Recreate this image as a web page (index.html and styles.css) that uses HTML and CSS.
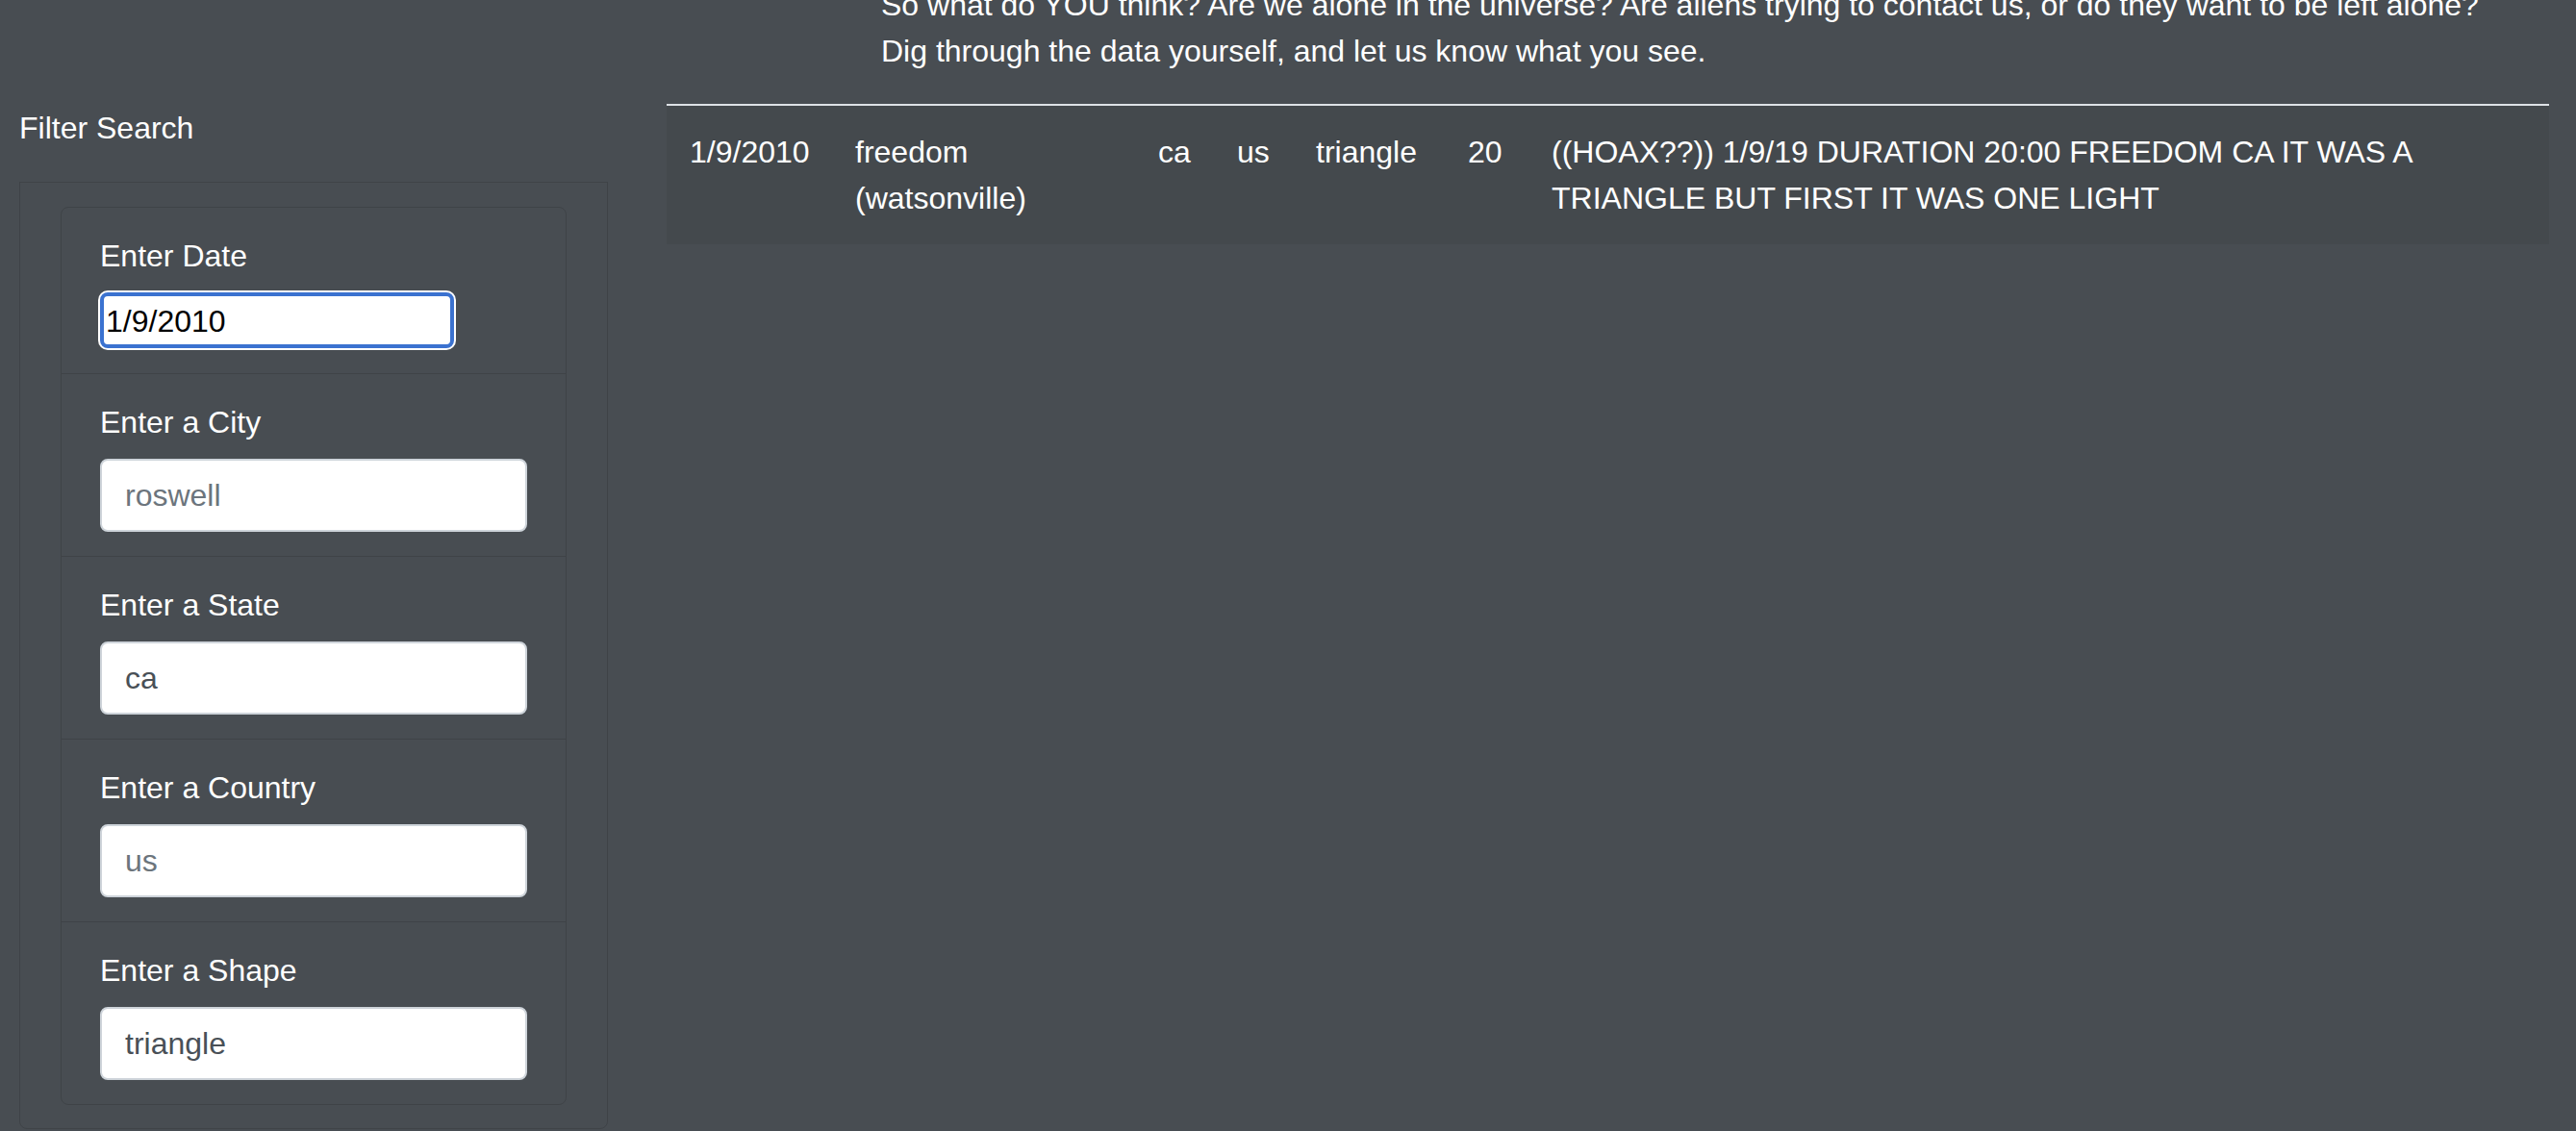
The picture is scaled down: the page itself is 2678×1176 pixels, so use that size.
FILE: index.html
```html
<!DOCTYPE html>
<html lang="en">
<head>
<meta charset="utf-8">
<title>UFO Sightings</title>
<link rel="stylesheet" href="styles.css">
</head>
<body>
<div class="intro">
  <p>So what do YOU think? Are we alone in the universe? Are aliens trying to contact us, or do they want to be left alone?<br>Dig through the data yourself, and let us know what you see.</p>
</div>
<div class="main">
  <aside class="sidebar">
    <p class="filter-title">Filter Search</p>
    <form class="filter-box">
      <ul class="filter-list">
        <li class="filter-item">
          <label class="filter-label" for="datetime">Enter Date</label>
          <input class="date-input" id="datetime" type="text" value="1/9/2010">
        </li>
        <li class="filter-item">
          <label class="filter-label" for="city">Enter a City</label>
          <input class="form-control" id="city" type="text" placeholder="roswell">
        </li>
        <li class="filter-item">
          <label class="filter-label" for="state">Enter a State</label>
          <input class="form-control" id="state" type="text" value="ca">
        </li>
        <li class="filter-item">
          <label class="filter-label" for="country">Enter a Country</label>
          <input class="form-control" id="country" type="text" placeholder="us">
        </li>
        <li class="filter-item">
          <label class="filter-label" for="shape">Enter a Shape</label>
          <input class="form-control" id="shape" type="text" value="triangle">
        </li>
      </ul>
    </form>
  </aside>
  <section class="results">
    <table class="ufo-table">
      <tbody>
        <tr class="ufo-row">
          <td class="c-date">1/9/2010</td>
          <td class="c-city">freedom (watsonville)</td>
          <td class="c-state">ca</td>
          <td class="c-country">us</td>
          <td class="c-shape">triangle</td>
          <td class="c-dur">20</td>
          <td class="c-comment">((HOAX??)) 1/9/19 DURATION 20:00 FREEDOM CA IT WAS A TRIANGLE BUT FIRST IT WAS ONE LIGHT</td>
        </tr>
      </tbody>
    </table>
  </section>
</div>
</body>
</html>
```

FILE: styles.css
```css
html, body {
  margin: 0;
  padding: 0;
}

body {
  background: #484d52;
  color: #ffffff;
  font-family: "Liberation Sans", Arial, sans-serif;
  font-size: 32px;
  line-height: 48px;
  width: 2678px;
  height: 1176px;
  overflow: hidden;
}

.intro {
  margin: -19px 0 0 916px;
}

.intro p {
  margin: 0 0 31px 0;
  white-space: nowrap;
}

.main {
  display: flex;
  align-items: flex-start;
}

.sidebar {
  width: 612px;
  margin-left: 20px;
  padding-top: 1px;
  flex: none;
}

.filter-title {
  margin: 0 0 32px 0;
}

.filter-box {
  margin: 0;
  border: 1px solid rgba(0, 0, 0, 0.125);
  border-radius: 0 0 8px 8px;
  padding: 25px 42px 24px;
}

.filter-list {
  list-style: none;
  margin: 0;
  padding: 0;
  border: 1px solid rgba(0, 0, 0, 0.125);
  border-radius: 8px;
}

.filter-item {
  padding: 26px 40px 25px;
  border-top: 1px solid rgba(0, 0, 0, 0.125);
}

.filter-item:first-child {
  border-top: 0;
  padding-bottom: 26px;
}

.filter-label {
  display: block;
  margin-bottom: 14px;
}

.date-input {
  display: block;
  box-sizing: border-box;
  width: 368px;
  height: 58px;
  margin: 0;
  padding: 2px 4px 0 2px;
  border: 4px solid #3b72d0;
  border-radius: 8px;
  box-shadow: 0 0 0 2px #ffffff;
  background: #ffffff;
  color: #000000;
  font-family: inherit;
  font-size: 32px;
  line-height: 48px;
  outline: none;
}

.form-control {
  display: block;
  box-sizing: border-box;
  width: 100%;
  height: 76px;
  margin: 0;
  padding: 12px 24px;
  border: 2px solid #ced4da;
  border-radius: 8px;
  background: #ffffff;
  color: #495057;
  font-family: inherit;
  font-size: 32px;
  line-height: 48px;
  outline: none;
}

.form-control::placeholder {
  color: #6c757d;
  opacity: 1;
}

.results {
  margin-left: 61px;
  width: 1957px;
  flex: none;
}

.ufo-table {
  width: 1957px;
  table-layout: fixed;
  border-collapse: separate;
  border-spacing: 0;
  color: #ffffff;
}

.ufo-row td {
  padding: 24px;
  vertical-align: top;
  border-top: 2px solid #dee2e6;
  background: rgba(0, 0, 0, 0.05);
}

.c-date { width: 124px; }
.c-city { width: 267px; }
.c-state { width: 34px; }
.c-country { width: 34px; }
.c-shape { width: 110px; }
.c-dur { width: 39px; }
.c-comment { width: 1013px; }
```
